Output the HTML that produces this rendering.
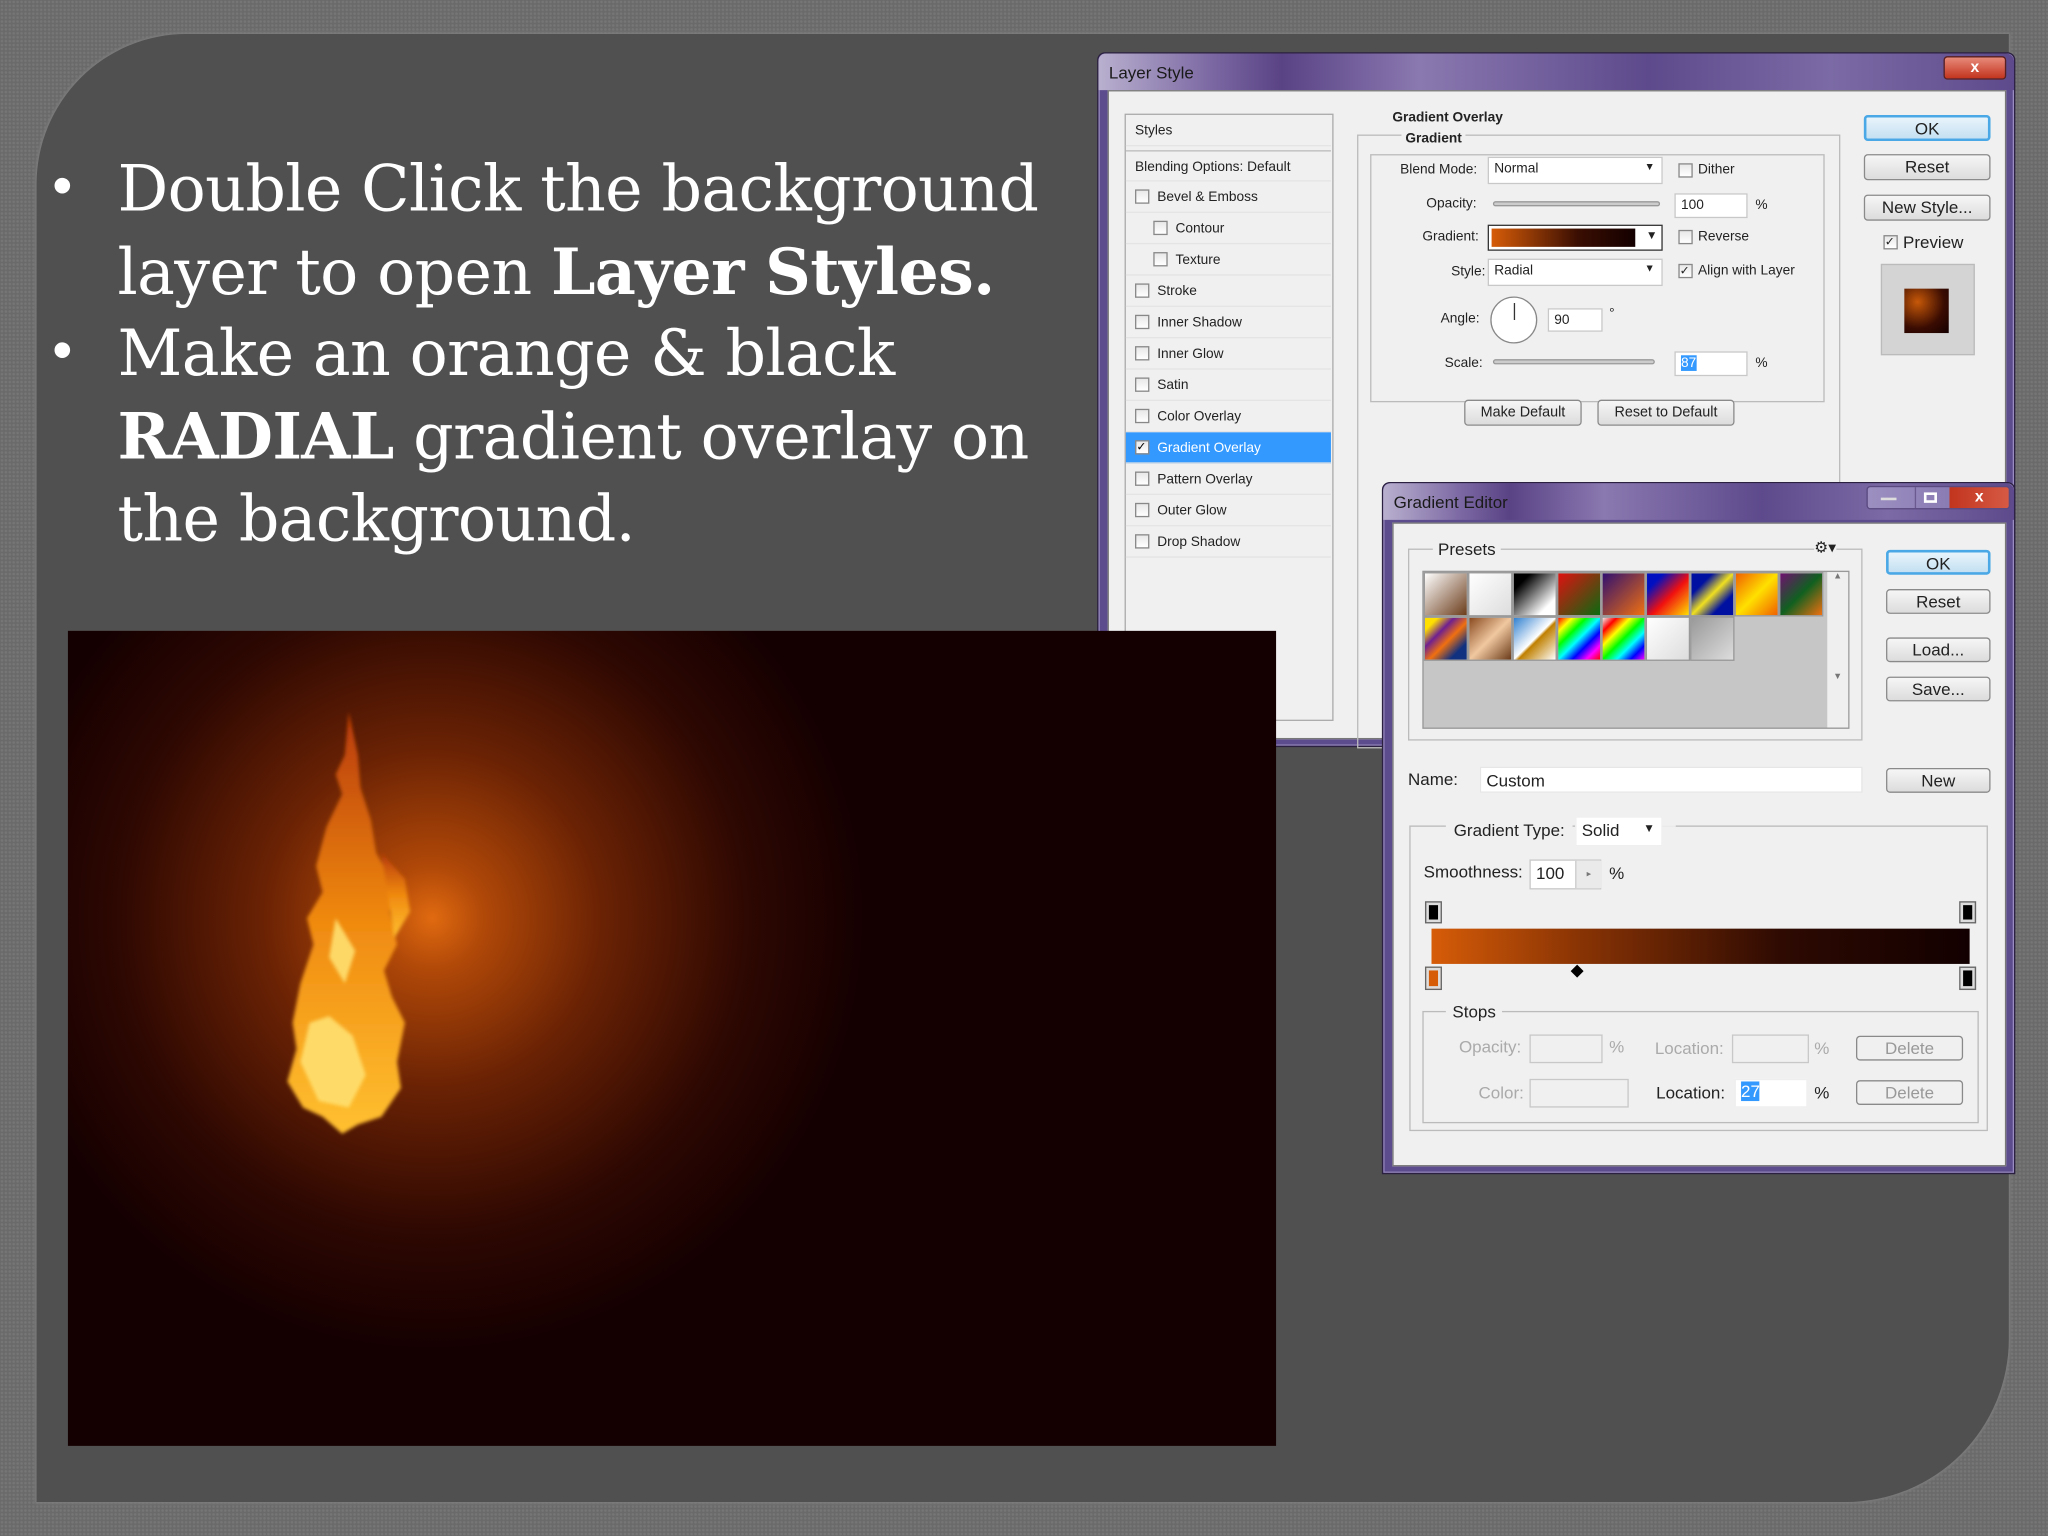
<!DOCTYPE html>
<html><head><meta charset="utf-8"><style>
*{margin:0;padding:0;box-sizing:border-box}
html,body{width:2048px;height:1536px;overflow:hidden;background:#6b6b6b}
#s{position:absolute;left:0;top:0;width:1568px;height:1176px;transform:scale(1.306122);transform-origin:0 0;
background-color:#6a6a6a;background-image:radial-gradient(#767676 0.8px,transparent 1.2px);background-size:3px 3px;font-family:"Liberation Sans",sans-serif}
.a{position:absolute}
#panel{left:28px;top:26px;width:1510px;height:1124px;background:#505050;border-radius:115px 0 125px 0;box-shadow:0 0 2px 1px #7c7c7c}
.t{font-family:"DejaVu Serif",serif;color:#fff;font-size:48.5px;line-height:63px;letter-spacing:-0.5px;white-space:nowrap}
.bul{font-size:44px;color:#fff}
#img{left:52px;top:483px;width:925px;height:624px;z-index:5;background:radial-gradient(circle at 279px 220px,#e06a10 0,#b04808 40px,#6a2204 130px,#2e0802 240px,#150001 330px,#140001 100%)}
.dlg{background:#5d4c8d;border:1px solid #2b2040;border-radius:6px 6px 0 0;box-shadow:0 0 0 1px #9a8cc0 inset}
.tb{height:28px;background:linear-gradient(90deg,#b9b0cf 0,#7d6aa4 12%,#5a4385 20%,#8a78b0 35%,#5d4a8c 60%,#7b6aa5 80%,#5d4a8c 100%);color:#1a1a1a;font-size:13px;padding:7px 8px;border-radius:6px 6px 0 0}
.cont{background:#f0f0f0;border:1px solid #777;font-size:10.5px;color:#222}
.btn{position:absolute;background:linear-gradient(#f6f6f6,#dcdcdc);border:1px solid #8a8a8a;border-radius:3px;text-align:center;font-size:13px;color:#222;line-height:18px}
.ok{border:2px solid #4aa8e6;background:linear-gradient(#e9f4fb,#c4e0f2)}
.grp{position:absolute;border:1px solid #bbb}
.lab{position:absolute;font-size:10.5px;color:#222;white-space:nowrap}
.inp{position:absolute;background:#fff;border:1px solid #c8c8c8;font-size:10.5px;padding:2px 4px}
.cb{position:absolute;width:11px;height:11px;border:1px solid #888;background:linear-gradient(#e8e8e8,#fff)}
.li{position:absolute;left:0;width:157px;height:24px;border-bottom:1px solid #e4e4e4;font-size:10.5px;padding:6px 0 0 24px;white-space:nowrap}
.li .cb{left:7px;top:6px}
.sw{position:absolute;width:34px;height:34px;border:1px solid #999}
</style></head><body><div id="s">
<div id="panel" class="a"></div>

<div class="a bul" style="left:40px;top:118px">•</div>
<div class="a t" style="left:90px;top:114px">Double Click the background<br>layer to open <b>Layer Styles.</b></div>
<div class="a bul" style="left:40px;top:244px">•</div>
<div class="a t" style="left:90px;top:240px">Make an orange &amp; black<br><b>RADIAL</b> gradient overlay on<br>the background.</div>

<div id="img" class="a">
 <svg width="925" height="624" style="position:absolute;left:0;top:0">
  <defs><filter id="bl"><feGaussianBlur stdDeviation="1.5"/></filter>
  <linearGradient id="fl" x1="0" y1="1" x2="0" y2="0"><stop offset="0" stop-color="#ffc030"/><stop offset=".5" stop-color="#f08a10"/><stop offset="1" stop-color="#b83a06"/></linearGradient></defs>
  <g filter="url(#bl)" fill="url(#fl)">
   <path d="M215 62 L212 95 L205 110 L210 125 L198 150 L190 180 L195 200 L183 220 L188 240 L178 270 L172 300 L175 320 L168 345 L180 365 L195 372 L210 385 L222 378 L240 372 L255 350 L252 330 L258 300 L248 280 L242 260 L252 240 L246 215 L250 195 L236 170 L232 145 L224 120 L222 95Z"/>
   <path d="M240 170 L258 190 L262 215 L250 235Z"/>
  </g>
  <g filter="url(#bl)" fill="#ffe070" opacity=".9">
   <path d="M185 300 L178 330 L192 360 L215 365 L228 340 L218 310 L200 295Z"/>
   <path d="M205 220 L200 250 L212 270 L220 245Z"/>
  </g>
 </svg>
</div>

<!-- Layer Style -->
<div class="a dlg" style="left:840px;top:40px;width:703px;height:532px">
 <div class="tb">Layer Style</div>
 <div class="a" style="left:647px;top:2px;width:48px;height:18px;background:linear-gradient(#e88a7a,#c2341e);border:1px solid #5a2020;border-radius:3px;color:#fff;font-size:12px;text-align:center;font-weight:bold">x</div>
 <div class="a cont" style="left:7px;top:28px;width:688px;height:497px">
  <div class="a" style="left:12px;top:17px;width:160px;height:465px;border:1px solid #aaa;background:#f0f0f0">
   <div class="li" style="top:0;padding-left:7px;height:24px">Styles</div>
   <div class="li" style="top:27px;padding-left:7px;border-top:1px solid #bbb">Blending Options: Default</div>
   <div class="li" style="top:51px"><span class="cb"></span>Bevel &amp; Emboss</div>
   <div class="li" style="top:75px;padding-left:38px"><span class="cb" style="left:21px"></span>Contour</div>
   <div class="li" style="top:99px;padding-left:38px"><span class="cb" style="left:21px"></span>Texture</div>
   <div class="li" style="top:123px"><span class="cb"></span>Stroke</div>
   <div class="li" style="top:147px"><span class="cb"></span>Inner Shadow</div>
   <div class="li" style="top:171px"><span class="cb"></span>Inner Glow</div>
   <div class="li" style="top:195px"><span class="cb"></span>Satin</div>
   <div class="li" style="top:219px"><span class="cb"></span>Color Overlay</div>
   <div class="li" style="top:243px;background:#3399ff;color:#fff"><span class="cb" style="font-size:9px;line-height:9px;color:#000">✓</span>Gradient Overlay</div>
   <div class="li" style="top:267px"><span class="cb"></span>Pattern Overlay</div>
   <div class="li" style="top:291px"><span class="cb"></span>Outer Glow</div>
   <div class="li" style="top:315px"><span class="cb"></span>Drop Shadow</div>
  </div>
  <div class="grp" style="left:190px;top:33px;width:370px;height:470px"></div>
  <div class="lab" style="left:214px;top:14px;font-weight:bold;background:#f0f0f0;padding:0 3px">Gradient Overlay</div>
  <div class="grp" style="left:200px;top:48px;width:348px;height:190px"></div>
  <div class="lab" style="left:224px;top:30px;font-weight:bold;background:#f0f0f0;padding:0 3px">Gradient</div>
  <div class="lab" style="left:223px;top:54px">Blend Mode:</div>
  <div class="inp" style="left:290px;top:50px;width:134px;height:21px">Normal<span style="position:absolute;right:5px;top:2px;font-size:8px">▼</span></div>
  <div class="cb" style="left:436px;top:55px"></div><div class="lab" style="left:451px;top:54px">Dither</div>
  <div class="lab" style="left:243px;top:80px">Opacity:</div>
  <div class="a" style="left:294px;top:84px;width:128px;height:4px;background:#ccc;border:1px solid #999;border-radius:2px"></div>
  <div class="inp" style="left:433px;top:78px;width:56px;height:19px">100</div><div class="lab" style="left:495px;top:81px">%</div>
  <div class="lab" style="left:240px;top:105px">Gradient:</div>
  <div class="a" style="left:290px;top:102px;width:134px;height:20px;border:1px solid #333;background:#fff;padding:2px"><div style="width:110px;height:14px;background:linear-gradient(90deg,#d65c08,#3a0e02 60%,#140000)"></div><span style="position:absolute;right:3px;top:2px;font-size:9px">▼</span></div>
  <div class="cb" style="left:436px;top:106px"></div><div class="lab" style="left:451px;top:105px">Reverse</div>
  <div class="lab" style="left:262px;top:132px">Style:</div>
  <div class="inp" style="left:290px;top:128px;width:134px;height:21px">Radial<span style="position:absolute;right:5px;top:2px;font-size:8px">▼</span></div>
  <div class="cb" style="left:436px;top:132px;font-size:9px;line-height:9px">✓</div><div class="lab" style="left:451px;top:131px">Align with Layer</div>
  <div class="lab" style="left:254px;top:168px">Angle:</div>
  <div class="a" style="left:292px;top:157px;width:36px;height:36px;border:1px solid #888;border-radius:50%;background:#fff"><div style="position:absolute;left:17px;top:4px;width:1px;height:13px;background:#333"></div></div>
  <div class="inp" style="left:336px;top:166px;width:42px;height:18px">90</div><div class="lab" style="left:383px;top:164px">°</div>
  <div class="lab" style="left:257px;top:202px">Scale:</div>
  <div class="a" style="left:294px;top:205px;width:124px;height:4px;background:#ccc;border:1px solid #999;border-radius:2px"></div>
  <div class="inp" style="left:433px;top:199px;width:56px;height:19px"><span style="background:#3399ff;color:#fff">87</span></div><div class="lab" style="left:495px;top:202px">%</div>
  <div class="btn" style="left:272px;top:236px;width:90px;height:20px;font-size:11px">Make Default</div>
  <div class="btn" style="left:374px;top:236px;width:105px;height:20px;font-size:11px">Reset to Default</div>
  <div class="btn ok" style="left:578px;top:18px;width:97px;height:20px">OK</div>
  <div class="btn" style="left:578px;top:48px;width:97px;height:20px">Reset</div>
  <div class="btn" style="left:578px;top:79px;width:97px;height:20px">New Style...</div>
  <div class="cb" style="left:593px;top:110px;font-size:9px;line-height:9px">✓</div><div class="lab" style="left:608px;top:108px;font-size:13px">Preview</div>
  <div class="a" style="left:591px;top:132px;width:72px;height:70px;background:#d4d4d4;border:1px solid #bbb"><div style="position:absolute;left:17px;top:18px;width:34px;height:34px;background:radial-gradient(circle at 30% 30%,#c65808,#3a0c02 60%,#140000)"></div></div>
 </div>
</div>

<!-- Gradient Editor -->
<div class="a dlg" style="left:1058px;top:369px;width:485px;height:530px;z-index:6">
 <div class="tb">Gradient Editor</div>
 <div class="a" style="left:370px;top:2px;width:110px;height:18px;border:1px solid #5a4a80;border-radius:3px;background:linear-gradient(90deg,#9c8fc0 0,#8a7cb4 58%,#c2341e 58%,#d65a44 100%)"><span style="position:absolute;left:36px;top:0;width:1px;height:16px;background:#6a5a90"></span><span style="position:absolute;left:10px;top:8px;width:12px;height:2px;background:#ddd"></span><span style="position:absolute;left:43px;top:4px;width:10px;height:8px;border:2px solid #fff"></span><span style="position:absolute;left:82px;top:0;color:#fff;font-size:12px;font-weight:bold">x</span></div>
 <div class="a cont" style="left:7px;top:30px;width:470px;height:493px">
  <div class="grp" style="left:11px;top:19px;width:348px;height:147px"></div>
  <div class="lab" style="left:30px;top:12px;font-size:13px;background:#f0f0f0;padding:0 4px">Presets</div>
  <div class="lab" style="left:322px;top:11px;font-size:12px;background:#f0f0f0">⚙▾</div>
  <div class="a" style="left:22px;top:36px;width:327px;height:121px;background:#c6c6c6;border:1px solid #999">
   <div class="a" style="right:0;top:0;width:16px;height:119px;background:#efefef;font-size:7px;color:#777;text-align:center">▲<br><br><br><br><br><br><br><br><br><br><br>▼</div>
  </div>
  <div class="sw" style="left:23px;top:37px;background:linear-gradient(135deg,#fff,#6b3c1a)"></div>
  <div class="sw" style="left:57px;top:37px;background:linear-gradient(135deg,#fff,#ddd)"></div>
  <div class="sw" style="left:91px;top:37px;background:linear-gradient(135deg,#000 20%,#fff 80%)"></div>
  <div class="sw" style="left:125px;top:37px;background:linear-gradient(135deg,#e01010,#0a6a10)"></div>
  <div class="sw" style="left:159px;top:37px;background:linear-gradient(135deg,#301070,#f07010)"></div>
  <div class="sw" style="left:193px;top:37px;background:linear-gradient(135deg,#0010c0 20%,#f01010 55%,#ffe000)"></div>
  <div class="sw" style="left:227px;top:37px;background:linear-gradient(135deg,#0010a0 25%,#f0e020 50%,#0010a0 75%)"></div>
  <div class="sw" style="left:261px;top:37px;background:linear-gradient(135deg,#f06000,#ffe000 50%,#f06000)"></div>
  <div class="sw" style="left:295px;top:37px;background:linear-gradient(135deg,#701070,#106020 50%,#f07010)"></div>
  <div class="sw" style="left:23px;top:71px;background:linear-gradient(135deg,#ffe000 15%,#702090 35%,#f07010 55%,#103080 80%)"></div>
  <div class="sw" style="left:57px;top:71px;background:linear-gradient(135deg,#8a4a20,#f0c8a0 50%,#6a3a18)"></div>
  <div class="sw" style="left:91px;top:71px;background:linear-gradient(135deg,#3080d0,#fff 50%,#c08000 55%,#fff)"></div>
  <div class="sw" style="left:125px;top:71px;background:linear-gradient(135deg,#f00,#ff0,#0f0,#0ff,#00f,#f0f,#f00)"></div>
  <div class="sw" style="left:159px;top:71px;background:linear-gradient(135deg,#eee,#f00,#ff0,#0f0,#0ff,#00f,#f0f)"></div>
  <div class="sw" style="left:193px;top:71px;background:linear-gradient(135deg,#fff,#ddd)"></div>
  <div class="sw" style="left:227px;top:71px;background:linear-gradient(135deg,#999,#ddd)"></div>
  <div class="btn ok" style="left:377px;top:20px;width:80px;height:19px">OK</div>
  <div class="btn" style="left:377px;top:50px;width:80px;height:19px">Reset</div>
  <div class="btn" style="left:377px;top:87px;width:80px;height:19px">Load...</div>
  <div class="btn" style="left:377px;top:117px;width:80px;height:19px">Save...</div>
  <div class="lab" style="left:11px;top:188px;font-size:13px">Name:</div>
  <div class="inp" style="left:66px;top:186px;width:293px;height:20px;font-size:13px;border-color:#e6e6e6">Custom</div>
  <div class="btn" style="left:377px;top:187px;width:80px;height:19px">New</div>
  <div class="grp" style="left:12px;top:231px;width:443px;height:234px"></div>
  <div class="lab" style="left:40px;top:227px;font-size:13px;background:#f0f0f0;padding:0 6px">Gradient Type:</div>
  <div class="inp" style="left:139px;top:224px;width:67px;height:23px;font-size:13px;border-color:#eee">Solid<span style="position:absolute;right:5px;top:3px;font-size:9px">▼</span></div>
  <div class="a" style="left:206px;top:231px;width:10px;height:1px;background:#f0f0f0"></div>
  <div class="lab" style="left:23px;top:259px;font-size:13px">Smoothness:</div>
  <div class="inp" style="left:104px;top:257px;width:55px;height:23px;font-size:13px">100<span style="position:absolute;left:34px;top:0;width:20px;height:21px;border-left:1px solid #ccc;background:#eaeaea;font-size:7px;text-align:center;line-height:21px;color:#777">▸</span></div>
  <div class="lab" style="left:165px;top:260px;font-size:13px">%</div>
  <div class="a" style="left:25px;top:290px;width:11px;height:15px;background:#000;border:2px solid #ddd;outline:1px solid #666"></div>
  <div class="a" style="left:434px;top:290px;width:11px;height:15px;background:#000;border:2px solid #ddd;outline:1px solid #666"></div>
  <div class="a" style="left:29px;top:310px;width:412px;height:27px;background:linear-gradient(90deg,#d65c08 0,#8a3404 27%,#2e0a02 65%,#120000 100%)"></div>
  <div class="a" style="left:137px;top:339px;width:7px;height:7px;background:#000;transform:rotate(45deg)"></div>
  <div class="a" style="left:25px;top:340px;width:11px;height:16px;background:#d65c08;border:2px solid #ddd;outline:1px solid #666"></div>
  <div class="a" style="left:434px;top:340px;width:11px;height:16px;background:#000;border:2px solid #ddd;outline:1px solid #666"></div>
  <div class="grp" style="left:22px;top:373px;width:426px;height:86px"></div>
  <div class="lab" style="left:40px;top:366px;font-size:13px;background:#f0f0f0;padding:0 5px">Stops</div>
  <div class="lab" style="left:50px;top:393px;font-size:13px;color:#aaa">Opacity:</div>
  <div class="inp" style="left:104px;top:391px;width:56px;height:22px;background:#f0f0f0"></div>
  <div class="lab" style="left:165px;top:393px;font-size:13px;color:#aaa">%</div>
  <div class="lab" style="left:200px;top:394px;font-size:13px;color:#aaa">Location:</div>
  <div class="inp" style="left:259px;top:391px;width:59px;height:22px;background:#f0f0f0"></div>
  <div class="lab" style="left:322px;top:394px;font-size:13px;color:#aaa">%</div>
  <div class="btn" style="left:354px;top:392px;width:82px;height:19px;color:#999;background:#f0f0f0">Delete</div>
  <div class="lab" style="left:65px;top:428px;font-size:13px;color:#aaa">Color:</div>
  <div class="inp" style="left:104px;top:425px;width:76px;height:22px;background:#f0f0f0"></div>
  <div class="lab" style="left:201px;top:428px;font-size:13px">Location:</div>
  <div class="inp" style="left:261px;top:425px;width:56px;height:22px;font-size:13px;border-color:#eee;padding-top:1px"><span style="background:#3399ff;color:#fff">27</span></div>
  <div class="lab" style="left:322px;top:428px;font-size:13px">%</div>
  <div class="btn" style="left:354px;top:426px;width:82px;height:19px;color:#999;background:#f0f0f0">Delete</div>
 </div>
</div>
</div></body></html>
